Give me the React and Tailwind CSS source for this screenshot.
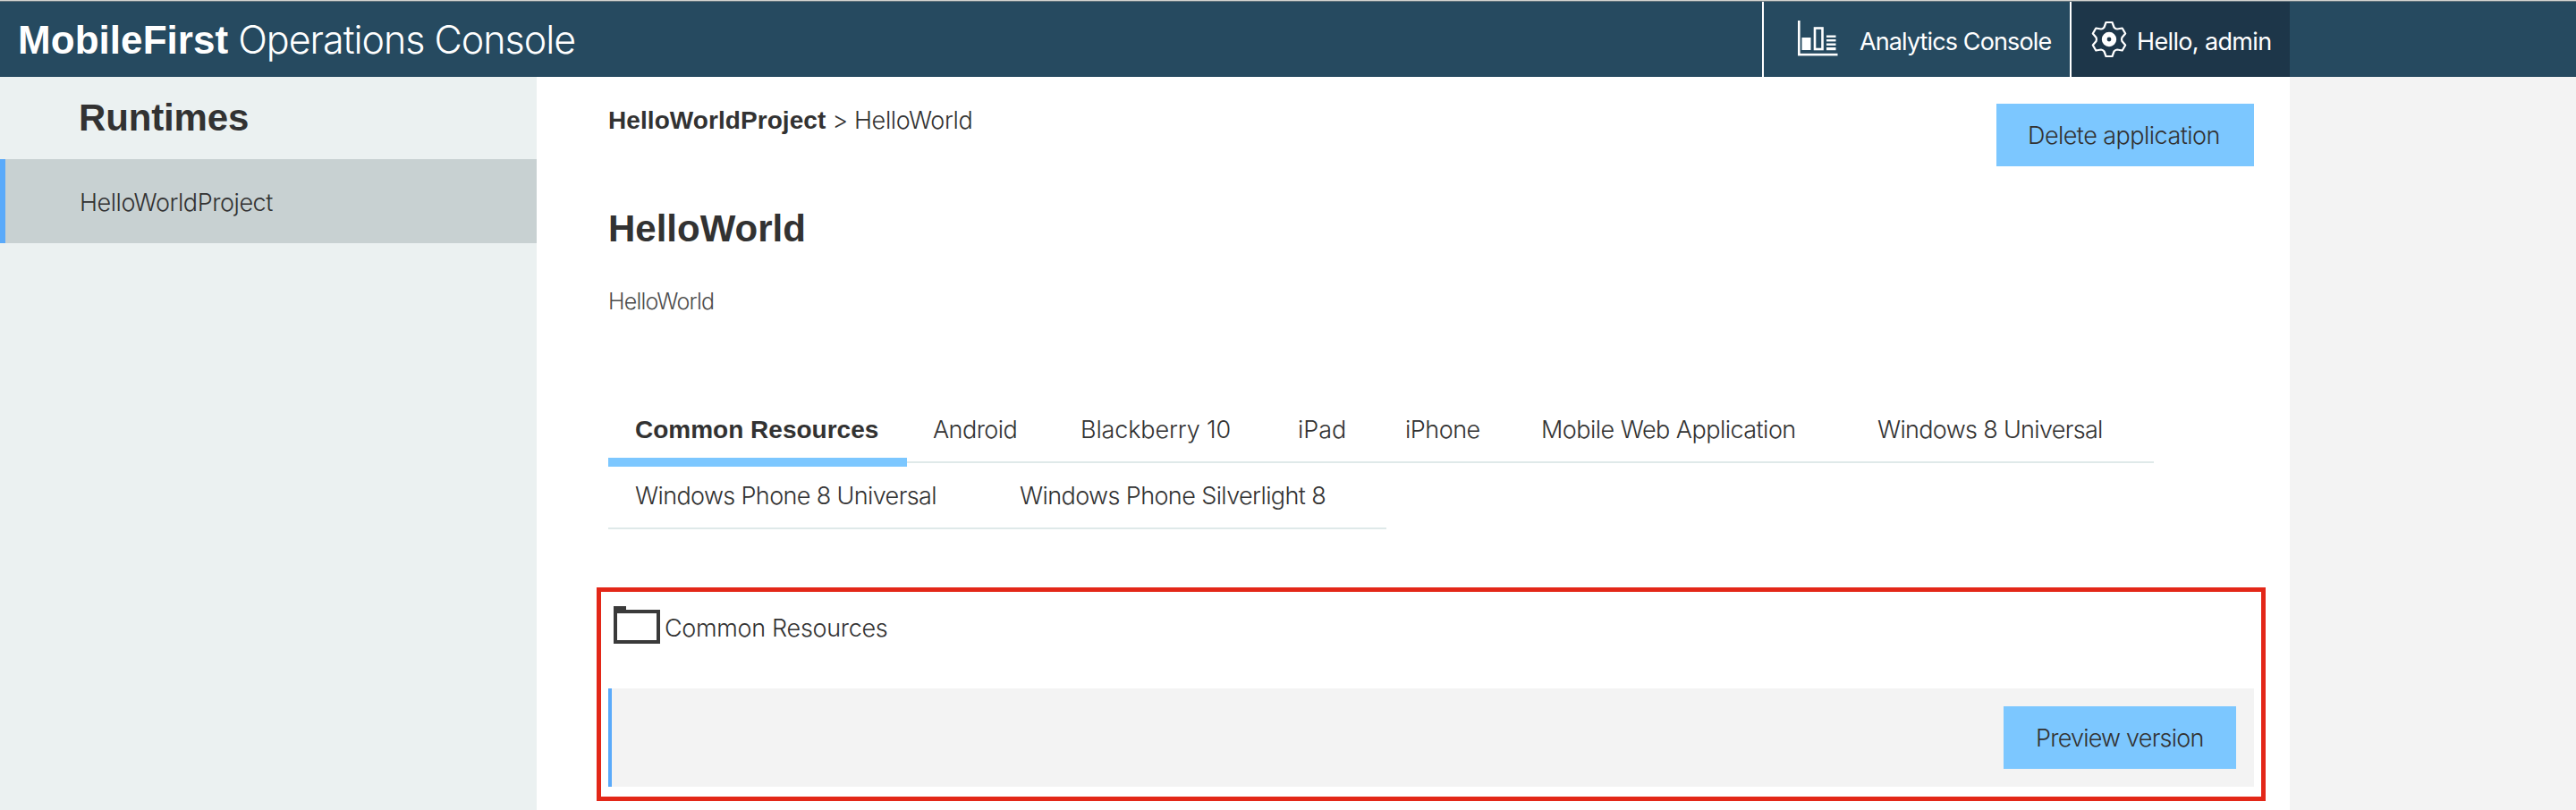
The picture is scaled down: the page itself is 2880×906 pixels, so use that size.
import React from "react";

const light = "font-['Inter','Liberation_Sans',sans-serif] font-light";

function ChartIcon() {
  return (
    <svg width="48" height="42" viewBox="0 0 48 42" fill="#fff" className="shrink-0">
      <rect x="2" y="1" width="2.6" height="39" />
      <rect x="2" y="37.8" width="44.5" height="2.6" />
      <rect x="6.5" y="20" width="10" height="14" />
      <rect x="21" y="9.5" width="8.5" height="23.5" fill="none" stroke="#fff" strokeWidth="2.6" />
      <rect x="34" y="17.5" width="10.5" height="2.4" />
      <rect x="34" y="22" width="10.5" height="2.4" />
      <rect x="34" y="26.5" width="10.5" height="2.4" />
      <rect x="34" y="31" width="10.5" height="3.2" />
    </svg>
  );
}

function GearIcon() {
  return (
    <svg width="42" height="42" viewBox="-21 -21 42 42" className="shrink-0">
      <path
        d="M-5.5-13.5-3.5-19H3.5L5.5-13.5Q7-11.6 8.94-11.5L14.7-12.5 18.2-6.5 14.44-2Q13.6 0 14.44 2L18.2 6.5 14.7 12.5 8.94 11.5Q7 11.6 5.5 13.5L3.5 19H-3.5L-5.5 13.5Q-7 11.6-8.94 11.5L-14.7 12.5-18.2 6.5-14.44 2Q-13.6 0-14.44-2L-18.2-6.5-14.7-12.5-8.94-11.5Q-7-11.6-5.5-13.5Z"
        fill="none"
        stroke="#fff"
        strokeWidth="2.2"
        strokeLinejoin="round"
      />
      <circle r="5.3" fill="none" stroke="#fff" strokeWidth="5.8" />
    </svg>
  );
}

function FolderIcon() {
  return (
    <svg width="52" height="42" viewBox="0 0 52 42" className="shrink-0">
      <rect x="0" y="0" width="14" height="6" fill="#3a3a3a" />
      <rect x="2" y="6" width="48" height="34" fill="none" stroke="#3a3a3a" strokeWidth="4" />
    </svg>
  );
}

function Tab({ label, className, active }) {
  return (
    <div className={"relative h-[74px] shrink-0 whitespace-nowrap border-b-2 border-[#dfe9e9] pt-[21px] leading-8 " + className}>
      {label}
      {active && <span className="absolute -bottom-1.5 left-0 h-2.5 w-full bg-[#7cc7ff]" />}
    </div>
  );
}

export default function App() {
  return (
    <div className="flex h-[906px] w-[2880px] flex-col overflow-hidden bg-[#f3f3f3] font-['Liberation_Sans',Arial,sans-serif] text-[27px] text-[#323232]">
      <header className="flex h-[86px] shrink-0 border-t border-[#d4d4d0] bg-[#264a60] text-white">
        <div className="flex w-full border-t border-[#63737c]">
          <h1 className="w-[1970px] shrink-0 whitespace-nowrap pl-[20px] pt-[22px] text-[44px] font-bold leading-[40px]">
            <span className="tracking-[0.05px]">MobileFirst</span>
            <span className={light + " ml-[11px] text-[43px] tracking-[-1.02px]"}>Operations Console</span>
          </h1>
          <a className="flex w-[344px] shrink-0 border-l-2 border-white pl-9 pt-5">
            <ChartIcon />
            <span className="ml-[23px] mt-[9px] whitespace-nowrap font-['Inter','Liberation_Sans',sans-serif] leading-8 tracking-[-0.88px]">Analytics Console</span>
          </a>
          <div className="flex w-[246px] shrink-0 border-l-2 border-white bg-[#1d3649] pl-[21px] pt-[21px]">
            <GearIcon />
            <span className="ml-[10px] mt-2 whitespace-nowrap font-['Inter','Liberation_Sans',sans-serif] leading-8 tracking-[-0.65px]">Hello, admin</span>
          </div>
        </div>
      </header>

      <div className="flex h-[820px]">
        <aside className="w-[600px] shrink-0 bg-[#ebf1f1]">
          <h2 className="h-[92px] pl-[88px] pt-[26px] text-[42px] font-bold leading-[40px] tracking-[-0.14px]">Runtimes</h2>
          <div className={light + " h-[94px] border-l-[6px] border-[#5aaafa] bg-[#c8d1d2] pl-[83px] pt-[33px] leading-8 tracking-[-0.45px]"}>
            HelloWorldProject
          </div>
        </aside>

        <main className="flex w-[1960px] shrink-0 flex-col bg-white pl-20 pr-10 pt-[30px]">
          <div className="flex h-[120px] justify-between">
            <div className="mt-[3px] h-8 whitespace-nowrap text-[28px] leading-8">
              <span className="font-bold tracking-[0.07px]">HelloWorldProject</span>
              <span className={light + " ml-[7px] text-[27px]"}>&gt;</span>
              <span className={light + " ml-[7px] text-[27px] tracking-[-0.38px]"}>HelloWorld</span>
            </div>
            <button className={light + " h-[70px] w-[288px] whitespace-nowrap bg-[#7cc7ff] pl-[35px] pt-0.5 text-left tracking-[-0.54px]"}>
              Delete application
            </button>
          </div>
          <h1 className="text-[42px] font-bold leading-[40px]">HelloWorld</h1>
          <p className={light + " mt-[45px] h-[123px] text-[25px] leading-8 tracking-[-0.78px] text-[#4c4c4c]"}>HelloWorld</p>

          <nav className={light}>
            <div className="flex">
              <Tab label="Common Resources" active className="w-[334px] pl-[30px] font-['Liberation_Sans',Arial,sans-serif] text-[28px] font-bold" />
              <Tab label="Android" className="w-[164px] pl-[29px] tracking-[-0.56px]" />
              <Tab label="Blackberry 10" className="w-[243px] pl-[30px] tracking-[-0.15px]" />
              <Tab label="iPad" className="w-[120px] pl-[30px]" />
              <Tab label="iPhone" className="w-[152px] pl-[30px] tracking-[-0.5px]" />
              <Tab label="Mobile Web Application" className="w-[377px] pl-[30px] tracking-[-0.53px]" />
              <Tab label="Windows 8 Universal" className="w-[338px] pl-[29px] tracking-[-0.68px]" />
            </div>
            <div className="flex">
              <Tab label="Windows Phone 8 Universal" className="w-[431px] pl-[30px] tracking-[-0.63px]" />
              <Tab label="Windows Phone Silverlight 8" className="w-[439px] pl-[29px] tracking-[-0.6px]" />
            </div>
          </nav>

          <section className="-mx-[13px] mt-[65px] h-[239px] border-[5px] border-[#e32718] px-2">
            <div className="flex h-[108px] pl-1.5 pt-4">
              <FolderIcon />
              <span className={light + " ml-[5px] mt-[9px] leading-8 tracking-[-0.31px]"}>Common Resources</span>
            </div>
            <div className="flex h-[110px] items-center justify-end border-l-4 border-[#5aaafa] bg-[#f3f3f3] pr-5">
              <button className={light + " h-[70px] w-[260px] whitespace-nowrap bg-[#7cc7ff] pl-9 pt-0.5 text-left tracking-[-0.79px]"}>
                Preview version
              </button>
            </div>
          </section>
        </main>
      </div>
    </div>
  );
}
